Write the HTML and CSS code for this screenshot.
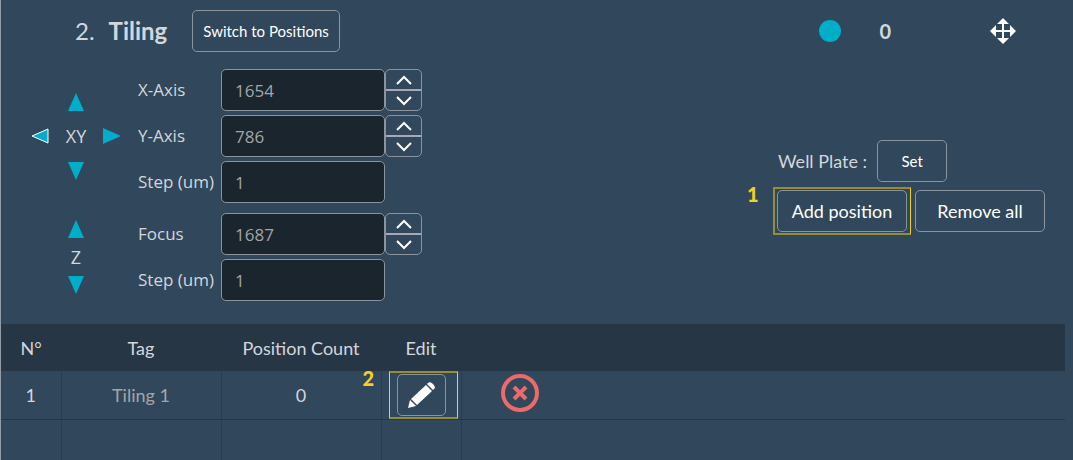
FILE: index.html
```html
<!DOCTYPE html>
<html lang="en">
<head>
    <meta charset="UTF-8">
    <meta name="viewport" content="width=device-width, initial-scale=1.0">
    <title>Tiling</title>
    <link rel="stylesheet" href="styles.css">
</head>
<body>
    <main class="panel">
        <header class="panel-header">
            <h1><span class="step">2.</span>Tiling</h1>
            <button class="btn btn-small" type="button">Switch to Positions</button>
            <div class="status">
                <span class="status-dot"></span>
                <span class="status-count">0</span>
                <button class="icon-btn" type="button" aria-label="Move">
                    <svg width="26" height="26" viewBox="0 0 26 26">
                        <path d="M13 0l6 6h-5v6h6V7l6 6-6 6v-5h-6v6h5l-6 6-6-6h5v-6H6v5l-6-6 6-6v5h6V6H7z" fill="#fff"/>
                    </svg>
                </button>
            </div>
        </header>

        <div class="controls">
            <div class="axes">
                <section class="axis-group">
                    <div class="pad">
                        <button class="arrow up" type="button" aria-label="Y up"><svg width="18" height="18" viewBox="0 0 18 18"><path d="M9 0l8 18H1z"/></svg></button>
                        <button class="arrow left active" type="button" aria-label="X left"><svg width="18" height="18" viewBox="0 0 18 18"><path d="M1 9l16-7v14z"/></svg></button>
                        <span class="pad-name">XY</span>
                        <button class="arrow right" type="button" aria-label="X right"><svg width="18" height="18" viewBox="0 0 18 18"><path d="M18 9L0 1v16z"/></svg></button>
                        <button class="arrow down" type="button" aria-label="Y down"><svg width="18" height="18" viewBox="0 0 18 18"><path d="M9 18L1 0h16z"/></svg></button>
                    </div>
                    <div class="fields">
                        <div class="field">
                            <label for="x-axis">X-Axis</label>
                            <input id="x-axis" type="text" value="1654">
                            <div class="spinner">
                                <button type="button" aria-label="Increase X"><svg width="16" height="10" viewBox="0 0 16 10"><path d="M1 9l7-7 7 7"/></svg></button>
                                <button type="button" aria-label="Decrease X"><svg width="16" height="10" viewBox="0 0 16 10"><path d="M1 1l7 7 7-7"/></svg></button>
                            </div>
                        </div>
                        <div class="field">
                            <label for="y-axis">Y-Axis</label>
                            <input id="y-axis" type="text" value="786">
                            <div class="spinner">
                                <button type="button" aria-label="Increase Y"><svg width="16" height="10" viewBox="0 0 16 10"><path d="M1 9l7-7 7 7"/></svg></button>
                                <button type="button" aria-label="Decrease Y"><svg width="16" height="10" viewBox="0 0 16 10"><path d="M1 1l7 7 7-7"/></svg></button>
                            </div>
                        </div>
                        <div class="field">
                            <label for="xy-step">Step (um)</label>
                            <input id="xy-step" type="text" value="1">
                        </div>
                    </div>
                </section>

                <section class="axis-group">
                    <div class="pad pad-z">
                        <button class="arrow up" type="button" aria-label="Focus up"><svg width="18" height="18" viewBox="0 0 18 18"><path d="M9 0l8 18H1z"/></svg></button>
                        <span class="pad-name">Z</span>
                        <button class="arrow down" type="button" aria-label="Focus down"><svg width="18" height="18" viewBox="0 0 18 18"><path d="M9 18L1 0h16z"/></svg></button>
                    </div>
                    <div class="fields">
                        <div class="field">
                            <label for="focus">Focus</label>
                            <input id="focus" type="text" value="1687">
                            <div class="spinner">
                                <button type="button" aria-label="Increase focus"><svg width="16" height="10" viewBox="0 0 16 10"><path d="M1 9l7-7 7 7"/></svg></button>
                                <button type="button" aria-label="Decrease focus"><svg width="16" height="10" viewBox="0 0 16 10"><path d="M1 1l7 7 7-7"/></svg></button>
                            </div>
                        </div>
                        <div class="field">
                            <label for="z-step">Step (um)</label>
                            <input id="z-step" type="text" value="1">
                        </div>
                    </div>
                </section>
            </div>

            <div class="actions">
                <div class="action-row">
                    <span>Well Plate :</span>
                    <button class="btn btn-small btn-set" type="button">Set</button>
                </div>
                <div class="action-row">
                    <div class="callout callout-add">
                        <span class="callout-number">1</span>
                        <button class="btn btn-wide" type="button">Add position</button>
                    </div>
                    <button class="btn btn-wide" type="button">Remove all</button>
                </div>
            </div>
        </div>

        <table class="positions">
            <colgroup>
                <col class="col-number">
                <col class="col-tag">
                <col class="col-count">
                <col class="col-edit">
                <col>
            </colgroup>
            <thead>
                <tr>
                    <th>N°</th>
                    <th>Tag</th>
                    <th>Position Count</th>
                    <th>Edit</th>
                    <th></th>
                </tr>
            </thead>
            <tbody>
                <tr>
                    <td>1</td>
                    <td><input class="tag-input" type="text" value="Tiling 1" aria-label="Tag"></td>
                    <td>0</td>
                    <td>
                        <div class="callout callout-edit">
                            <span class="callout-number">2</span>
                            <button class="btn btn-edit" type="button" aria-label="Edit">
                                <svg width="28" height="28" viewBox="0 0 28 28" fill="#fff">
                                    <path d="M20 3l1-1q2-2 5 1t1 5l-1 1z"/>
                                    <path d="M19 4l6 6L10 24l-6-6z"/>
                                    <path d="M3 19l6 6-8 2z"/>
                                </svg>
                            </button>
                        </div>
                    </td>
                    <td class="cell-delete">
                        <button class="icon-btn" type="button" aria-label="Delete">
                            <svg width="38" height="38" viewBox="0 0 38 38" fill="none" stroke="#ed6a6a">
                                <circle cx="19" cy="19" r="17" stroke-width="4"/>
                                <path d="M13 13l12 12M25 13L13 25" stroke-width="4"/>
                            </svg>
                        </button>
                    </td>
                </tr>
                <tr>
                    <td></td>
                    <td></td>
                    <td></td>
                    <td></td>
                    <td></td>
                </tr>
            </tbody>
        </table>
    </main>
</body>
</html>
```
FILE: styles.css
```css
:root {
    --bg: #31475b;
    --bg-header: #263645;
    --bg-field: #1a252d;
    --text: #d3d6dc;
    --text-muted: #a3a6a9;
    --border: #8b949d;
    --cell-border: #2a3d4e;
    --accent: #00aec9;
    --mark: #f2d21f;
    --mark-dim: #958b3b;
    --ui-font: Lato, sans-serif;
    --label-font: "Open Sans", "Noto Sans", sans-serif;
}

* {
    margin: 0;
    padding: 0;
    box-sizing: border-box;
}

body {
    background-color: var(--bg);
    color: var(--text);
    font: 18px/24px var(--ui-font);
    overflow: hidden;
}

button,
input {
    font: inherit;
    color: inherit;
}

button {
    background: none;
    border: none;
    cursor: pointer;
}

svg {
    display: block;
}

.panel {
    min-height: 100vh;
    border-left: 1px solid #929ca6;
    padding-top: 10px;
}

.panel-header {
    display: flex;
    align-items: center;
    padding: 0 57px 0 74px;
}

.panel-header h1 {
    font-size: 24px;
    font-weight: 700;
    margin-right: 25px;
}

.step {
    font-weight: 400;
    margin-right: 14px;
}

.status {
    display: flex;
    align-items: center;
    margin-left: auto;
}

.status-dot {
    width: 22px;
    height: 22px;
    border-radius: 50%;
    background-color: var(--accent);
}

.status-count {
    font-size: 20px;
    font-weight: 700;
    margin: 0 99px 0 38px;
}

.btn {
    height: 42px;
    border: 1px solid var(--border);
    border-radius: 5px;
    color: #fff;
}

.btn-small {
    font-size: 15px;
    padding: 0 10px;
}

.btn-set {
    width: 70px;
}

.btn-wide {
    width: 130px;
}

.controls {
    display: flex;
    justify-content: space-between;
    align-items: center;
    padding: 17px 28px 23px 30px;
}

.axes {
    display: flex;
    flex-direction: column;
    gap: 10px;
}

.axis-group {
    display: flex;
    align-items: center;
    gap: 17px;
    font-family: var(--label-font);
    font-size: 17px;
}

.pad {
    display: grid;
    grid-template: "a up b" 18px "left name right" 51px "c down d" 18px / 18px 54px 18px;
    place-items: center;
    font-size: 18px;
}

.pad-z {
    grid-template: "up" 18px "name" 38px "down" 18px / 90px;
}

.up { grid-area: up; }
.down { grid-area: down; }
.left { grid-area: left; }
.right { grid-area: right; }
.pad-name { grid-area: name; }

.arrow {
    fill: var(--accent);
}

.arrow.active {
    stroke: #fff;
}

.fields {
    display: flex;
    flex-direction: column;
    gap: 4px;
}

.field {
    display: flex;
    align-items: center;
}

.field label {
    width: 83px;
}

.field input {
    width: 164px;
    height: 42px;
    padding: 0 13px;
    background-color: var(--bg-field);
    border: 1px solid var(--border);
    border-radius: 5px;
    color: var(--text-muted);
}

.spinner {
    width: 37px;
    height: 42px;
    display: flex;
    flex-direction: column;
    border: 1px solid var(--border);
    border-radius: 5px;
}

.spinner button {
    flex: 1;
    display: flex;
    align-items: center;
    justify-content: center;
    fill: none;
    stroke: #fff;
    stroke-width: 2;
}

.spinner button + button {
    border-top: 2px solid #a5a9b1;
}

.actions {
    display: flex;
    flex-direction: column;
    gap: 8px;
    padding-top: 2px;
}

.action-row {
    display: flex;
    align-items: center;
    gap: 8px;
}

.action-row > span {
    margin: 0 2px 0 1px;
}

/* yellow numbered callouts */
.callout {
    position: relative;
}

.callout::after {
    content: "";
    position: absolute;
    inset: -3px -4px;
    border: 2px solid var(--mark-dim);
    border-right: 1px solid var(--mark);
    pointer-events: none;
}

.callout-number {
    position: absolute;
    top: -8px;
    left: -30px;
    color: var(--mark);
    font-size: 20px;
    font-weight: 900;
}

.positions {
    width: calc(100% - 8px);
    table-layout: fixed;
    border-collapse: collapse;
    text-align: center;
}

.col-number { width: 60px; }
.col-tag { width: 160px; }
.col-count { width: 160px; }
.col-edit { width: 80px; }

.positions th {
    height: 47px;
    background-color: var(--bg-header);
    font-weight: 400;
}

.positions td {
    height: 48px;
    border-right: 1px solid var(--cell-border);
    border-bottom: 1px solid var(--bg-header);
}

.positions td:last-child {
    border-right: none;
}

.tag-input {
    width: 100%;
    background: none;
    border: none;
    text-align: center;
    color: var(--text-muted);
}

.callout-edit {
    width: 49px;
    margin: 0 auto;
}

.callout-edit::after {
    inset: -3px -12px -3px -8px;
    border-left: 1px solid var(--mark);
}

.callout-edit .callout-number {
    left: -34px;
}

.btn-edit {
    width: 49px;
    display: flex;
    align-items: center;
    justify-content: center;
}

.positions .cell-delete {
    padding: 0 0 4px 39px;
    text-align: left;
}

.cell-delete .icon-btn {
    display: block;
}
```
